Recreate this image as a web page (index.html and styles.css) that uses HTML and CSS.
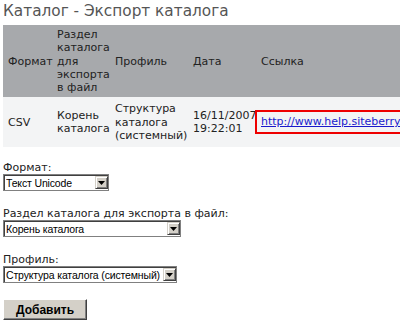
FILE: index.html
```html
<!DOCTYPE html>
<html lang="ru">
<head>
    <meta charset="UTF-8">
    <meta name="viewport" content="width=device-width, initial-scale=1.0">
    <title>Каталог - Экспорт каталога</title>
    <link rel="stylesheet" href="styles.css">
</head>
<body>
    <div class="page">
        <h1 class="title">Каталог - Экспорт каталога</h1>

        <table class="export-list">
            <colgroup>
                <col class="col-format">
                <col class="col-section">
                <col class="col-profile">
                <col class="col-date">
                <col class="col-link">
            </colgroup>
            <tr class="list-head">
                <th>Формат</th>
                <th>Раздел каталога для экспорта в файл</th>
                <th>Профиль</th>
                <th>Дата</th>
                <th>Ссылка</th>
            </tr>
            <tr class="list-row">
                <td>CSV</td>
                <td>Корень каталога</td>
                <td>Структура каталога (системный)</td>
                <td>16/11/2007 19:22:01</td>
                <td class="link-cell"><span class="link-box"><a href="#">http://www.help.siteberry.ru/export/catalog.csv</a></span></td>
            </tr>
        </table>

        <form class="export-form">
            <div class="form-group">
                <label>Формат:</label>
                <div class="select-wrap select-format">
                    <select>
                        <option>Текст Unicode</option>
                    </select>
                    <span class="select-btn"><svg width="7" height="4" viewBox="0 0 7 4"><path d="M0 0h7L3.5 4z" fill="#000"/></svg></span>
                </div>
            </div>
            <div class="form-group">
                <label>Раздел каталога для экспорта в файл:</label>
                <div class="select-wrap select-section">
                    <select>
                        <option>Корень каталога</option>
                    </select>
                    <span class="select-btn"><svg width="7" height="4" viewBox="0 0 7 4"><path d="M0 0h7L3.5 4z" fill="#000"/></svg></span>
                </div>
            </div>
            <div class="form-group">
                <label>Профиль:</label>
                <div class="select-wrap select-profile">
                    <select>
                        <option>Структура каталога (системный)</option>
                    </select>
                    <span class="select-btn"><svg width="7" height="4" viewBox="0 0 7 4"><path d="M0 0h7L3.5 4z" fill="#000"/></svg></span>
                </div>
            </div>
            <button type="button" class="add-btn">Добавить</button>
        </form>
    </div>
</body>
</html>
```

FILE: styles.css
```css
body {
    margin: 0;
    padding: 0;
    background: #fff;
    font-family: "DejaVu Sans", Verdana, sans-serif;
    font-size: 11px;
    color: #222;
}
.page {
    width: 400px;
    height: 324px;
    overflow: hidden;
    padding: 0 0 0 3px;
    box-sizing: border-box;
}
.title {
    margin: 0;
    padding-top: 2px;
    height: 23px;
    font-size: 15.3px;
    font-weight: normal;
    line-height: 19px;
    color: #555;
    white-space: nowrap;
}
.export-list {
    width: 520px;
    table-layout: fixed;
    border-collapse: collapse;
    line-height: 13.3px;
}
.col-format { width: 49px; }
.col-section { width: 58px; }
.col-profile { width: 78px; }
.col-date { width: 68px; }
.col-link { width: 267px; }
.export-list th,
.export-list td {
    text-align: left;
    vertical-align: middle;
    font-weight: normal;
    padding: 3px 1px 3px 5px;
}
.list-head {
    background: #a7a9ac;
    color: #222;
}
.list-head th {
    height: 66px;
}
.list-row {
    background: #f3f4f5;
}
.list-row td {
    padding-top: 5px;
    padding-bottom: 5px;
}
.export-list .link-cell {
    white-space: nowrap;
    padding-left: 0;
}
.link-box {
    display: inline-block;
    margin-left: -1px;
    border: 2px solid #ee0000;
    padding: 3px 4px;
    line-height: 14px;
}
.link-box a {
    color: #1a1acc;
}
.export-form {
    padding-top: 14px;
}
.form-group {
    margin-bottom: 16px;
}
.form-group label {
    display: block;
    line-height: 13px;
}
.select-wrap {
    position: relative;
    height: 17px;
}
.select-format { width: 106px; }
.select-section { width: 178px; }
.select-profile { width: 174px; }
.select-wrap select {
    appearance: none;
    -webkit-appearance: none;
    display: block;
    width: 100%;
    height: 100%;
    margin: 0;
    padding: 0 0 0 2px;
    border: 1px solid #808080;
    border-radius: 0;
    box-shadow: inset 1px 1px 0 #404040;
    background: #fff;
    font-family: "Liberation Sans", Arial, sans-serif;
    font-size: 10.5px;
    letter-spacing: -0.15px;
    color: #000;
}
.select-btn {
    position: absolute;
    top: 2px;
    right: 1px;
    width: 13px;
    height: 13px;
    box-sizing: border-box;
    background: #d4d0c8;
    border: 1px solid;
    border-color: #d4d0c8 #404040 #404040 #d4d0c8;
    box-shadow: inset 1px 1px 0 #fff, inset -1px -1px 0 #808080;
    display: flex;
    align-items: center;
    justify-content: center;
}
.add-btn {
    display: block;
    width: 84px;
    height: 21px;
    margin: 0;
    padding: 0;
    background: #d4d0c8;
    border: 1px solid;
    border-color: #fff #404040 #404040 #fff;
    box-shadow: inset -1px -1px 0 #808080;
    font-family: "Liberation Sans", Arial, sans-serif;
    font-size: 12px;
    font-weight: bold;
    color: #000;
    cursor: pointer;
}
```
